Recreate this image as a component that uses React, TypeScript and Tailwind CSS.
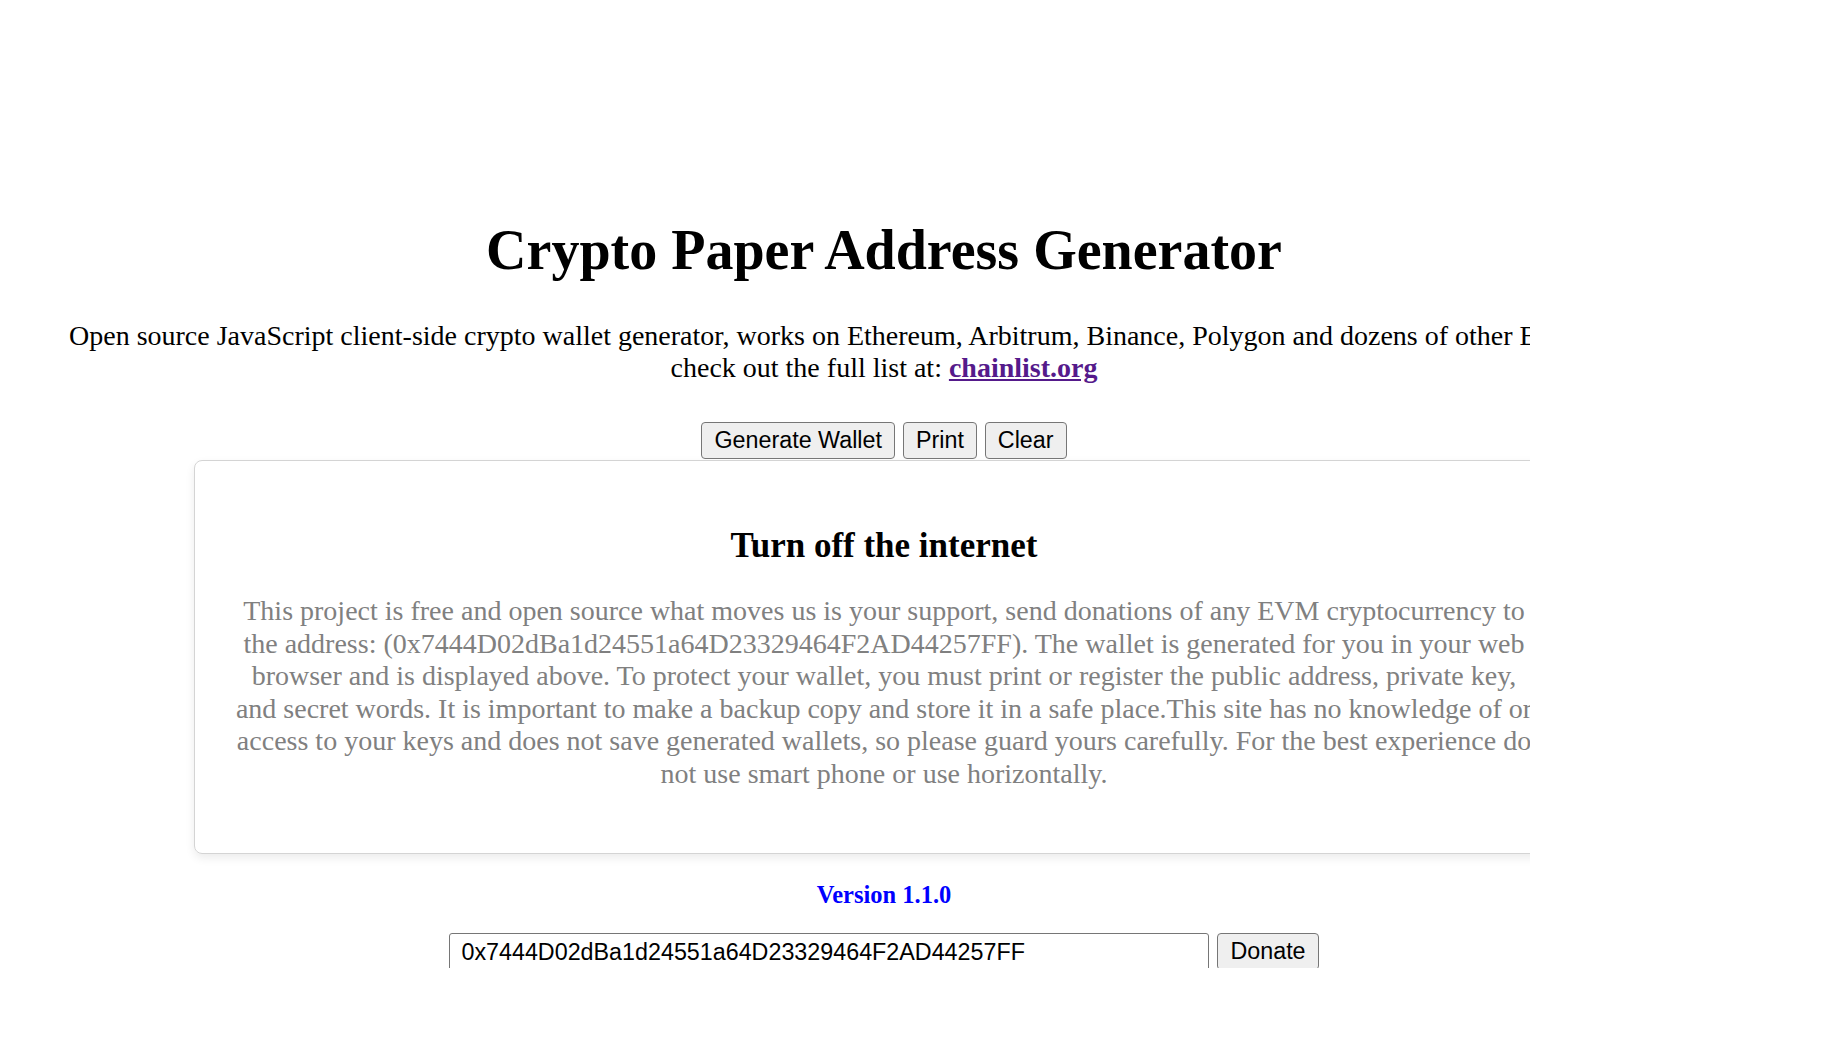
const serif = { fontFamily: "'Liberation Serif', 'Times New Roman', serif" };
const sans = { fontFamily: "'Liberation Sans', Arial, sans-serif" };

function Btn({ children }: { children: React.ReactNode }) {
  return (
    <button
      className="h-[37px] px-[12px] bg-[#efefef] border border-[#767676] rounded-[4px] text-[23.3px] leading-none text-black"
      style={sans}
    >
      {children}
    </button>
  );
}

export default function App() {
  const address = "0x7444D02dBa1d24551a64D23329464F2AD44257FF";

  return (
    <div className="w-full h-[1046px] bg-white">
      {/* the page is cut at the right and at the bottom */}
      <div className="w-[1530px] h-[968px] overflow-hidden">
        <div className="w-[1768px] pt-[218px] text-black text-center" style={serif}>
          <h1 className="m-0 text-[56px] leading-[64px] font-bold">Crypto Paper Address Generator</h1>

          <div className="mt-[38px] text-[28px] leading-[32px]">
            <div className="pl-[69px] text-left whitespace-nowrap">
              Open source JavaScript client-side crypto wallet generator, works on Ethereum, Arbitrum, Binance, Polygon and dozens of other EVM networks,
            </div>
            <div>
              check out the full list at:{" "}
              <a href="#" className="font-bold underline text-[#551a8b]">
                chainlist.org
              </a>
            </div>
          </div>

          <div className="mt-[38px] flex justify-center gap-2">
            <Btn>Generate Wallet</Btn>
            <Btn>Print</Btn>
            <Btn>Clear</Btn>
          </div>

          {/* Aviso */}
          <div className="mt-px mx-[194px] border border-[#d4d4d4] rounded-[8px] shadow-[0_4px_10px_rgba(0,0,0,0.08)] pt-[65px] px-[34px] pb-[63px]">
            <h3 className="m-0 text-[35px] leading-[40px] font-bold">Turn off the internet</h3>
            <p className="mt-[29px] text-[28px] leading-[32.5px] text-[#808080]">
              This project is free and open source what moves us is your support, send donations of any EVM cryptocurrency to the address: ({address}). The wallet is generated for you in your web browser and is displayed above. To protect your wallet, you must print or register the public address, private key, and secret words. It is important to make a backup copy and store it in a safe place.This site has no knowledge of or access to your keys and does not save generated wallets, so please guard yours carefully. For the best experience do not use smart phone or use horizontally.
            </p>
          </div>

          <h5 className="mt-[27px] text-[24.5px] leading-[28px] font-bold text-[#0000ff]">Version 1.1.0</h5>

          <div className="mt-[24px] flex justify-center gap-2">
            <input
              readOnly
              value={address}
              className="w-[760px] h-[38px] px-[11px] border border-[#767676] rounded-[3px] text-[23.3px] text-black bg-white"
              style={sans}
            />
            <Btn>Donate</Btn>
          </div>
        </div>
      </div>
    </div>
  );
}
